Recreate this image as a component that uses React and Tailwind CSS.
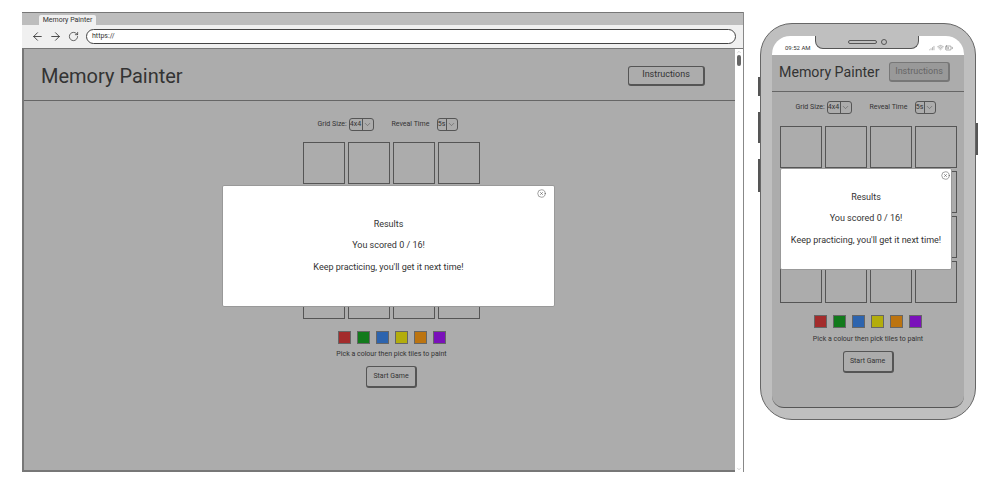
import React from "react";
import { ArrowLeft, ArrowRight, RotateCw, CircleX, ChevronDown, Wifi, BatteryMedium, SignalHigh, ChevronUp } from "lucide-react";

const swatches = ["bg-[#a32c2c]", "bg-[#127a1c]", "bg-[#2d64ae]", "bg-[#b3ad0c]", "bg-[#bc7410]", "bg-[#7a10ba]"];
const tiles = Array.from({ length: 16 }, (_, i) => i);

const Select = ({ value, width }) => (
    <div className={`flex h-[13px] items-stretch rounded-[3px] border border-[#555] ${width}`}>
        <span className="flex-1 border-r border-[#555] text-center text-[7px] leading-[11px] text-[#333]">{value}</span>
        <span className="flex w-[10px] items-center justify-center">
            <ChevronDown size={9} strokeWidth={1.5} className="text-[#555]" />
        </span>
    </div>
);

const Controls = ({ className }) => (
    <div className={`flex items-center justify-center gap-[18px] ${className}`}>
        <div className="flex items-center gap-[4px]">
            <span className="w-[27px] whitespace-nowrap text-[7px] text-[#333]">Grid Size:</span>
            <Select value="4x4" width="w-[25px]" />
        </div>
        <div className="flex items-center gap-[9px]">
            <span className="w-[36px] whitespace-nowrap text-[7px] text-[#333]">Reveal Time</span>
            <Select value="5s" width="w-[21px]" />
        </div>
    </div>
);

const Board = () => (
    <div className="grid grid-cols-[repeat(4,42px)] grid-rows-[repeat(4,42px)] gap-[3px]">
        {tiles.map((t) => (
            <div key={t} className="border border-[#555]" />
        ))}
    </div>
);

const Palette = () => (
    <div className="flex justify-center gap-[6px]">
        {swatches.map((c) => (
            <div key={c} className={`h-[13px] w-[13px] border border-[#666] ${c}`} />
        ))}
    </div>
);

const StartButton = () => (
    <div className="flex h-[22px] w-[51px] items-center justify-center rounded-[3px] border border-[#555] border-b-2 border-r-2 text-[7px] text-[#333]">
        Start Game
    </div>
);

const Modal = ({ box, close }) => (
    <div className={`absolute flex flex-col items-center justify-center gap-[8px] rounded-[2px] border border-[#999] bg-white text-[9px] text-[#333] ${box}`}>
        <CircleX size={9} strokeWidth={1.2} className={`absolute ${close}`} />
        <p>Results</p>
        <p>You scored 0 / 16!</p>
        <p>Keep practicing, you'll get it next time!</p>
    </div>
);

export default function App() {
    return (
        <div className="flex h-[494px] w-[1008px] items-start overflow-hidden bg-white pl-[22px] pt-[12px] font-['Roboto',sans-serif]">
            {/* desktop browser */}
            <div className="flex h-[460px] w-[722px] flex-col border-r border-[#888]">
                <div className="flex h-[13px] items-end border-t border-[#777] bg-[#bdbdbd] pl-[17px]">
                    <div className="flex h-[10px] w-[57px] items-center justify-center rounded-t-[2px] bg-[#f0f0f0] text-[7px] text-[#333]">
                        Memory Painter
                    </div>
                </div>
                <div className="flex h-[24px] items-center gap-[5px] border-b border-[#777] bg-[#f0f0f0] pl-[9px] pr-[7px] text-[#333]">
                    <ArrowLeft size={13} strokeWidth={1.6} />
                    <ArrowRight size={13} strokeWidth={1.6} />
                    <RotateCw size={11} strokeWidth={1.6} className="ml-[1px]" />
                    <div className="ml-[2px] flex h-[15px] flex-1 items-center rounded-full border border-[#444] bg-white pl-[5px] text-[7px] text-[#333]">
                        https://
                    </div>
                </div>
                <div className="flex flex-1">
                    <div className="relative flex flex-1 flex-col border-b-2 border-l-2 border-[#777] bg-[#acacac]">
                        <div className="flex h-[52px] items-center justify-between border-b border-[#666] pl-[17px] pr-[30px] pt-[2px]">
                            <span className="text-[20px] leading-none text-[#333]">Memory Painter</span>
                            <div className="flex h-[20px] w-[77px] items-center justify-center rounded-[3px] border border-[#555] border-b-2 border-r-2 text-[9px] text-[#333]">
                                Instructions
                            </div>
                        </div>
                        <div className="flex flex-col items-center pl-[24px] pt-[17px]">
                            <Controls className="pr-[8px]" />
                            <div className="mt-[11px]"><Board /></div>
                            <div className="mt-[12px]"><Palette /></div>
                            <p className="mt-[5px] text-[7px] text-[#333]">Pick a colour then pick tiles to paint</p>
                            <div className="mt-[6px]"><StartButton /></div>
                        </div>
                        <Modal box="left-[198px] top-[136px] h-[122px] w-[333px]" close="right-[8px] top-[3px]" />
                    </div>
                    <div className="flex w-[8px] flex-col items-center justify-between bg-white">
                        <div className="flex flex-col items-center">
                            <ChevronUp size={6} strokeWidth={1} className="text-[#555]" />
                            <div className="h-[11px] w-[4px] rounded-full bg-[#666]" />
                        </div>
                        <ChevronDown size={6} strokeWidth={1} className="text-[#555]" />
                    </div>
                </div>
            </div>

            {/* phone */}
            <div className="ml-[14px] mt-[11px] flex items-start">
                <div className="mt-[54px] flex flex-col gap-[16px]">
                    <div className="h-[19px] w-[2px] bg-[#555]" />
                    <div className="h-[31px] w-[2px] bg-[#555]" />
                    <div className="h-[33px] w-[2px] bg-[#555]" />
                </div>
                <div className="h-[397px] w-[216px] rounded-[32px] border border-[#666] bg-[#bfbfbf] px-[11px] py-[12px]">
                    <div className="relative flex h-[372px] w-[192px] flex-col overflow-hidden rounded-b-[12px] rounded-t-[18px] border-b border-[#555] bg-[#acacac]">
                        <div className="flex h-[19px] items-center justify-between bg-white pl-[13px] pr-[11px] text-[6px] text-[#333]">
                            <span className="pt-[4px]">09:52 AM</span>
                            <div className="flex items-center gap-[1px] pt-[4px]">
                                <SignalHigh size={7} strokeWidth={1.2} />
                                <Wifi size={7} strokeWidth={1.2} />
                                <BatteryMedium size={8} strokeWidth={1.2} />
                            </div>
                        </div>
                        <div className="flex h-[37px] items-center justify-between border-b border-[#666] pb-[2px] pl-[7px] pr-[14px]">
                            <span className="whitespace-nowrap text-[14.2px] leading-none text-[#333]">Memory Painter</span>
                            <div className="flex h-[20px] w-[61px] items-center justify-center rounded-[3px] border border-[#777] border-b-2 border-r-2 bg-[#999] text-[9px] text-[#666]">
                                Instructions
                            </div>
                        </div>
                        <div className="flex flex-col items-center pt-[9px]">
                            <Controls className="pr-[5px]" />
                            <div className="mt-[12px]"><Board /></div>
                            <div className="mt-[12px]"><Palette /></div>
                            <p className="mt-[6px] text-[7px] text-[#333]">Pick a colour then pick tiles to paint</p>
                            <div className="mt-[6px]"><StartButton /></div>
                        </div>
                        <Modal box="left-[8px] top-[132px] h-[102px] w-[172px]" close="right-[1px] top-[2px]" />
                        {/* notch */}
                        <div className="absolute left-[43px] top-0 flex h-[13px] w-[104px] items-center justify-center gap-[4px] rounded-b-[8px] border-x border-b border-[#555] bg-[#bfbfbf]">
                            <div className="h-[4px] w-[29px] rounded-full border border-[#555]" />
                            <div className="h-[6px] w-[6px] rounded-full border border-[#555]" />
                        </div>
                    </div>
                </div>
                <div className="mt-[100px] h-[32px] w-[2px] bg-[#555]" />
            </div>
        </div>
    );
}
